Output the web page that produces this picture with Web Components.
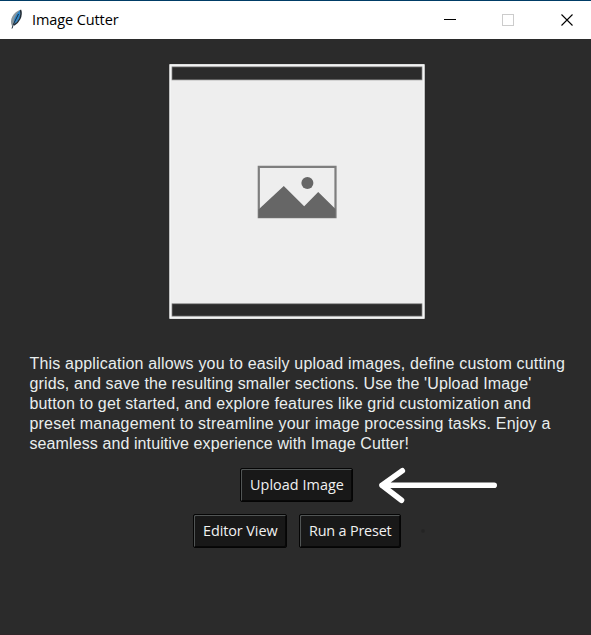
<!DOCTYPE html>
<html lang="en"><head><meta charset="utf-8"><title>Image Cutter</title>
<style>html,body{margin:0;height:100%;overflow:hidden;background:#2b2b2b}</style></head>
<body>
<app-window>
<title-bar slot="title">Image Cutter</title-bar>
<image-preview></image-preview>
<intro-text>
<text-line width="535.5">This application allows you to easily upload images, define custom cutting</text-line>
<text-line width="502">grids, and save the resulting smaller sections. Use the 'Upload Image'</text-line>
<text-line width="501.5">button to get started, and explore features like grid customization and</text-line>
<text-line width="521">preset management to streamline your image processing tasks. Enjoy a</text-line>
<text-line width="379.5">seamless and intuitive experience with Image Cutter!</text-line>
</intro-text>
<action-row class="first"><tool-button style="width:113px"><text-line width="94">Upload Image</text-line></tool-button><hint-arrow></hint-arrow></action-row>
<action-row><tool-button style="width:94px"><text-line width="74.5">Editor View</text-line></tool-button><tool-button style="width:102px"><text-line width="82.5">Run a Preset</text-line></tool-button></action-row>
</app-window>
<script>
const define=(name,html,ready)=>customElements.define(name,class extends HTMLElement{
  connectedCallback(){
    if(this.shadowRoot)return;
    this.attachShadow({mode:'open'}).innerHTML=html;
    if(ready)ready(this);
  }
});
define('app-window',`<style>
:host{display:flex;flex-direction:column;box-sizing:border-box;height:635px;width:591px;background:#2b2b2b;border-top:1px solid #003c66;border-bottom:1px solid #302629}
main{display:flex;flex-direction:column;align-items:center;padding-top:25px}
</style><slot name="title"></slot><main><slot></slot></main>`);
define('title-bar',`<style>
:host{display:flex;align-items:center;height:38px;background:#fff;color:#000;font:14.5px "Open Sans","Noto Sans",sans-serif}
.feather{margin-left:8px;width:16px;height:22px;margin-right:8px}
text-line{flex:1;line-height:38px}
.ctl{display:block;width:161px;height:38px}
</style>
<svg class="feather" viewBox="0 0 16 22"><path d="M4 17C1 11 5 3 13 .5C15 6 11 13 5 16Z" fill="#8b969c"/><path d="M6 15C5 9 9 4 12 1.5C13.5 7 10 13 6 15Z" fill="#2f86c8"/><path d="M12.5 1C14.5 7 11 13.5 6 16" fill="none" stroke="#222c36" stroke-width="1.4"/><path d="M10.5 5L5.5 15L4 19.5" fill="none" stroke="#1b2c3c" stroke-width="1"/></svg>
<text-line width="86.5"><slot></slot></text-line>
<svg class="ctl" viewBox="0 0 161 38" fill="none"><path d="M14 18.5H26" stroke="#000"/><rect x="72.5" y="13.5" width="11" height="11" stroke="#ccc"/><path d="M131.5 13.5L142.5 24.5M142.5 13.5L131.5 24.5" stroke="#000" stroke-width="1.1"/></svg>`);
define('image-preview',`<style>:host{display:block;width:256px;height:255px;margin-left:3px}svg{display:block}</style>
<svg width="256" height="255" viewBox="0 0 256 255">
<rect x=".5" y=".3" width="255" height="254.5" fill="#eee"/>
<rect x="1.2" y="1" width="253.6" height="252.9" fill="none" stroke="#f4f6f5" stroke-width="1.4"/>
<rect x="3" y="2.9" width="250" height="13" fill="#2b2b2b" stroke="#858585" stroke-width=".7"/>
<rect x="3" y="239.8" width="250" height="12.3" fill="#2b2b2b" stroke="#858585" stroke-width=".7"/>
<path d="M89.8 102.9H166.5V153.2H89.8Z" fill="none" stroke="#7e7e7e" stroke-width="2.2"/>
<path d="M89.5 145.5L114.8 122L135.2 142.3L149.2 128L166.5 145V153.8H89.5Z" fill="#666"/><circle cx="138.4" cy="119" r="6" fill="#666"/>
</svg>`);
define('intro-text',`<style>:host{display:block;box-sizing:border-box;width:591px;height:100px;margin-top:35px;padding-left:29.5px;font:16px/20px "Liberation Sans",Arial,sans-serif;color:#e9eeee}</style><slot></slot>`);
define('action-row',`<style>:host{display:flex;box-sizing:border-box;justify-content:center;gap:12px;margin-top:12px;width:100%;padding-left:3px;position:relative}:host(.first){margin-top:14px;padding-left:2px}slot{display:contents}</style><slot></slot>`);
define('tool-button',`<style>:host{display:block;box-sizing:border-box;height:34px;background:#181818;color:#f1f1f1;border:1px solid #050505;border-radius:2px;box-shadow:inset 1px 1px #515555,inset -1px -1px #080808;padding-left:9px;font:14.4px/32px "Open Sans","Noto Sans",sans-serif}</style><slot></slot>`);
define('hint-arrow',`<style>:host{position:absolute;left:374px;top:-4px}svg{display:block}</style>
<svg width="126" height="70" viewBox="0 0 126 70" fill="none" stroke="#fff" stroke-width="5.6" stroke-linecap="round" stroke-linejoin="round"><path d="M8 21.3H120.2M28.3 6.8L8 21.3L27.5 36.3"/><circle cx="49" cy="67" r="1.8" fill="#242424" stroke="none"/></svg>`);
// A single line of text whose tracking is adjusted to a given width.
// Defined last, so that the surrounding fonts apply when it measures itself.
define('text-line','<style>:host{display:block;white-space:nowrap}span{display:inline-block}</style><span><slot></slot></span>',el=>{
  const span=el.shadowRoot.querySelector('span');
  const host=el.getRootNode().host;
  const text=(el.textContent.trim()||host.textContent.trim());
  const natural=span.getBoundingClientRect().width;
  span.style.letterSpacing=(+el.getAttribute('width')-natural)/text.length+'px';
});
</script>
</body></html>
